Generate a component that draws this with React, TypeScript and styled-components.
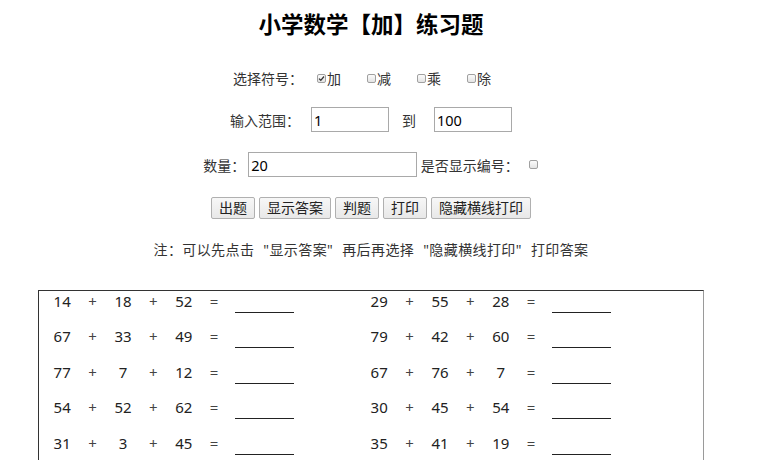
import React from "react";
import styled, { createGlobalStyle } from "styled-components";

const GlobalStyle = createGlobalStyle`
  html, body { margin: 0; padding: 0; background: #fff; }
  body {
    font-family: "Noto Sans", "Noto Sans CJK SC", "Liberation Sans", sans-serif;
    font-size: 14px;
    color: #333;
  }
`;

const Page = styled.div`
  width: 726px;
  margin-left: 8px;
  display: flex;
  flex-direction: column;
  align-items: center;
`;

const Title = styled.h2`
  margin: 9px 0 0;
  font-family: "Noto Sans CJK SC", sans-serif;
  font-size: 22.5px;
  line-height: 28px;
  font-weight: 700;
  color: #000;
`;

const Row = styled.div<{ $top: number; $h: number; $tail?: number }>`
  margin-top: ${(p) => p.$top}px;
  height: ${(p) => p.$h}px;
  display: flex;
  align-items: center;
  justify-content: center;
  padding-right: ${(p) => p.$tail ?? 0}px;
  font-size: 14px;
  color: #333;
  white-space: nowrap;
`;

const Label = styled.span<{ $gap?: number }>`
  margin-right: ${(p) => p.$gap ?? 0}px;
`;

const Choice = styled.label`
  display: inline-flex;
  align-items: center;
  margin: 0 12px 0 14px;
`;

const Box = styled.span<{ $ml?: number }>`
  display: inline-flex;
  align-items: center;
  justify-content: center;
  width: 9px;
  height: 9px;
  box-sizing: border-box;
  border: 1px solid #a0a0a0;
  border-radius: 2px;
  background: linear-gradient(#fbfbfb, #e4e4e4);
  margin-right: 1px;
  margin-left: ${(p) => p.$ml ?? 0}px;
`;

const Field = styled.input<{ $w: number }>`
  width: ${(p) => p.$w}px;
  height: 25px;
  box-sizing: border-box;
  border: 1px solid #a9a9a9;
  padding: 0 2px;
  font-family: inherit;
  font-size: 14.5px;
  color: #000;
  outline: none;
`;

const Between = styled.span`
  margin: 0 18px 0 13px;
`;

const Btn = styled.button`
  height: 22px;
  padding: 0 7px;
  margin: 0 2px;
  box-sizing: border-box;
  border: 1px solid #b0b0b0;
  border-radius: 2px;
  background: linear-gradient(#f7f7f7, #e8e8e8);
  font-family: inherit;
  font-size: 14px;
  line-height: 20px;
  color: #222;
`;

const Note = styled.p`
  margin: 21px 0 0;
  line-height: 20px;
  font-size: 14px;
  color: #333;
  word-spacing: 5px;
  letter-spacing: 0.4px;
`;

const Sheet = styled.div`
  margin-top: 30px;
  width: 666px;
  box-sizing: border-box;
  border: 1px solid #333;
  border-right-color: #9a9a9a;
  padding: 0 8px;
  display: grid;
  grid-template-columns: 317px 317px;
  grid-auto-rows: 35.4px;
`;

const Problem = styled.div`
  display: flex;
  align-items: flex-start;
`;

const Token = styled.span<{ $op?: boolean }>`
  width: 30.4px;
  text-align: center;
  line-height: 21px;
  font-size: 15px;
  color: ${(p) => (p.$op ? "#444" : "#222")};
`;

const Blank = styled.span`
  width: 59px;
  height: 21px;
  margin-left: 6px;
  border-bottom: 1px solid #222;
`;

const Check = ({ checked, ml }: { checked?: boolean; ml?: number }) => (
  <Box $ml={ml}>
    {checked && (
      <svg width="7" height="7" viewBox="0 0 7 7">
        <path d="M1 3.6 L2.8 5.3 L6 1.5" fill="none" stroke="#333" strokeWidth="1.3" />
      </svg>
    )}
  </Box>
);

const problems: number[][] = [
  [14, 18, 52], [29, 55, 28],
  [67, 33, 49], [79, 42, 60],
  [77, 7, 12], [67, 76, 7],
  [54, 52, 62], [30, 45, 54],
  [31, 3, 45], [35, 41, 19],
];

export default function App() {
  return (
    <>
      <GlobalStyle />
      <Page>
        <Title>小学数学【加】练习题</Title>
        <Row $top={30} $h={22} $tail={6}>
          <Label>选择符号：</Label>
          <Choice><Check checked />加</Choice>
          <Choice><Check />减</Choice>
          <Choice><Check />乘</Choice>
          <Choice><Check />除</Choice>
        </Row>
        <Row $top={18} $h={25}>
          <Label $gap={11}>输入范围：</Label>
          <Field $w={78} defaultValue="1" />
          <Between>到</Between>
          <Field $w={78} defaultValue="100" />
        </Row>
        <Row $top={20} $h={25}>
          <Label $gap={3}>数量：</Label>
          <Field $w={169} defaultValue="20" />
          <Label>&nbsp;是否显示编号：</Label>
          <Check ml={10} />
        </Row>
        <Row $top={20} $h={22}>
          <Btn>出题</Btn>
          <Btn>显示答案</Btn>
          <Btn>判题</Btn>
          <Btn>打印</Btn>
          <Btn>隐藏横线打印</Btn>
        </Row>
        <Note>注：可以先点击 "显示答案" 再后再选择 "隐藏横线打印" 打印答案</Note>
        <Sheet>
          {problems.map((p, i) => (
            <Problem key={i}>
              <Token>{p[0]}</Token>
              <Token $op>+</Token>
              <Token>{p[1]}</Token>
              <Token $op>+</Token>
              <Token>{p[2]}</Token>
              <Token $op>=</Token>
              <Blank />
            </Problem>
          ))}
        </Sheet>
      </Page>
    </>
  );
}
